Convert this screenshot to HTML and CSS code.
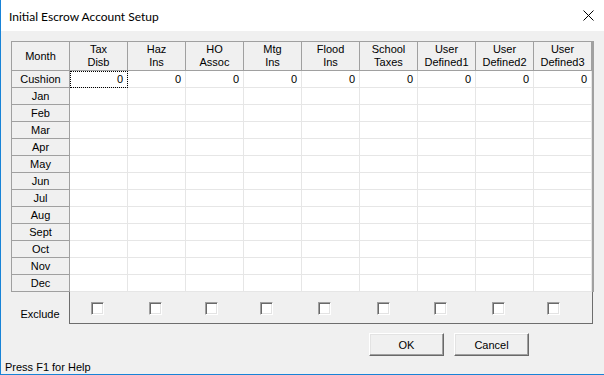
FILE: index.html
```html
<!DOCTYPE html>
<html>
<head>
<meta charset="utf-8">
<link rel="stylesheet" href="styles.css">
</head>
<body>
<div class="window">
  <div class="titlebar">
    <span class="title">Initial Escrow Account Setup</span>
    <svg class="close" width="11" height="11" viewBox="0 0 11 11"><path d="M0.5 0.5 L10.5 10.5 M10.5 0.5 L0.5 10.5" stroke="#000" stroke-width="1" fill="none"/></svg>
  </div>
  <div class="content">
    <div class="grid">
      <div class="hd">Month</div><div class="hd">Tax<br>Disb</div><div class="hd">Haz<br>Ins</div><div class="hd">HO<br>Assoc</div><div class="hd">Mtg<br>Ins</div><div class="hd">Flood<br>Ins</div><div class="hd">School<br>Taxes</div><div class="hd">User<br>Defined1</div><div class="hd">User<br>Defined2</div><div class="hd">User<br>Defined3</div>
      <div class="rh">Cushion</div><div class="c focus">0</div><div class="c">0</div><div class="c">0</div><div class="c">0</div><div class="c">0</div><div class="c">0</div><div class="c">0</div><div class="c">0</div><div class="c">0</div>
      <div class="rh">Jan</div><div class="c"></div><div class="c"></div><div class="c"></div><div class="c"></div><div class="c"></div><div class="c"></div><div class="c"></div><div class="c"></div><div class="c"></div>
      <div class="rh">Feb</div><div class="c"></div><div class="c"></div><div class="c"></div><div class="c"></div><div class="c"></div><div class="c"></div><div class="c"></div><div class="c"></div><div class="c"></div>
      <div class="rh">Mar</div><div class="c"></div><div class="c"></div><div class="c"></div><div class="c"></div><div class="c"></div><div class="c"></div><div class="c"></div><div class="c"></div><div class="c"></div>
      <div class="rh">Apr</div><div class="c"></div><div class="c"></div><div class="c"></div><div class="c"></div><div class="c"></div><div class="c"></div><div class="c"></div><div class="c"></div><div class="c"></div>
      <div class="rh">May</div><div class="c"></div><div class="c"></div><div class="c"></div><div class="c"></div><div class="c"></div><div class="c"></div><div class="c"></div><div class="c"></div><div class="c"></div>
      <div class="rh">Jun</div><div class="c"></div><div class="c"></div><div class="c"></div><div class="c"></div><div class="c"></div><div class="c"></div><div class="c"></div><div class="c"></div><div class="c"></div>
      <div class="rh">Jul</div><div class="c"></div><div class="c"></div><div class="c"></div><div class="c"></div><div class="c"></div><div class="c"></div><div class="c"></div><div class="c"></div><div class="c"></div>
      <div class="rh">Aug</div><div class="c"></div><div class="c"></div><div class="c"></div><div class="c"></div><div class="c"></div><div class="c"></div><div class="c"></div><div class="c"></div><div class="c"></div>
      <div class="rh">Sept</div><div class="c"></div><div class="c"></div><div class="c"></div><div class="c"></div><div class="c"></div><div class="c"></div><div class="c"></div><div class="c"></div><div class="c"></div>
      <div class="rh">Oct</div><div class="c"></div><div class="c"></div><div class="c"></div><div class="c"></div><div class="c"></div><div class="c"></div><div class="c"></div><div class="c"></div><div class="c"></div>
      <div class="rh">Nov</div><div class="c"></div><div class="c"></div><div class="c"></div><div class="c"></div><div class="c"></div><div class="c"></div><div class="c"></div><div class="c"></div><div class="c"></div>
      <div class="rh">Dec</div><div class="c"></div><div class="c"></div><div class="c"></div><div class="c"></div><div class="c"></div><div class="c"></div><div class="c"></div><div class="c"></div><div class="c"></div>
    </div>
    <div class="exclude-row">
      <div class="exclude-label">Exclude</div>
      <div class="exclude-panel">
        <span class="cb"></span><span class="cb"></span><span class="cb"></span><span class="cb"></span><span class="cb"></span><span class="cb"></span><span class="cb"></span><span class="cb"></span><span class="cb"></span>
      </div>
    </div>
    <div class="buttons">
      <button class="btn">OK</button>
      <button class="btn">Cancel</button>
    </div>
    <div class="status">Press F1 for Help</div>
  </div>
</div>
</body>
</html>
```
FILE: styles.css
```css
html, body {
  margin: 0;
  padding: 0;
}
body {
  width: 604px;
  height: 375px;
  overflow: hidden;
  font-family: "Liberation Sans", Arial, sans-serif;
  font-size: 11px;
  color: #000;
}
.window {
  box-sizing: border-box;
  width: 604px;
  height: 375px;
  border-left: 1px solid #1883d7;
  border-bottom: 1px solid #1883d7;
  background: #f0f0f0;
  display: flex;
  flex-direction: column;
}
.titlebar {
  height: 31px;
  flex: none;
  background: #fff;
  display: flex;
  align-items: center;
  padding-left: 8px;
  padding-right: 10px;
}
.title {
  font-family: Lato, "Noto Sans", sans-serif;
  font-size: 12px;
  color: #000;
  margin-top: 1px;
}
.close {
  margin-left: auto;
  margin-top: 0px;
}
.content {
  flex: 1;
  display: flex;
  flex-direction: column;
  padding-left: 10px;
  padding-top: 10px;
}
.grid {
  display: grid;
  grid-template-columns: repeat(10, 58px);
  grid-template-rows: 29px repeat(13, 17px);
  width: 580px;
  border-left: 1px solid #a0a0a0;
  border-top: 1px solid #a0a0a0;
  border-right: 2px solid #a0a0a0;
  background: #fff;
}
.grid > div {
  box-sizing: border-box;
  border-right: 1px solid #a0a0a0;
  border-bottom: 1px solid #a0a0a0;
}
.grid > .hd {
  background: #f0f0f0;
  display: flex;
  align-items: center;
  justify-content: center;
  text-align: center;
  line-height: 13px;
}
.grid > .rh {
  background: #f0f0f0;
  text-align: center;
  line-height: 16px;
}
.grid > .c {
  background: #fff;
  border-color: #e6e6e6;
  text-align: right;
  padding-right: 4px;
  line-height: 16px;
}
.grid > .c.focus {
  outline: 1px dotted #000;
  outline-offset: -1px;
}
.exclude-row {
  display: flex;
  height: 32px;
}
.exclude-label {
  width: 58px;
  text-align: center;
  padding-top: 16px;
  box-sizing: border-box;
}
.exclude-panel {
  box-sizing: border-box;
  width: 524px;
  height: 32px;
  border-left: 1px solid #6d6d6d;
  border-right: 1px solid #6d6d6d;
  border-bottom: 1px solid #6d6d6d;
  display: flex;
  align-items: flex-start;
  padding-top: 10px;
  padding-left: 21px;
}
.cb {
  box-sizing: border-box;
  width: 13px;
  height: 13px;
  flex: none;
  background: #fff;
  border-top: 1px solid #a0a0a0;
  border-left: 1px solid #a0a0a0;
  border-right: 1px solid #fff;
  border-bottom: 1px solid #fff;
  box-shadow: inset 1px 1px 0 #696969, inset -1px -1px 0 #e3e3e3;
}
.cb:nth-child(2) { margin-left: 45px; }
.cb:nth-child(3) { margin-left: 43px; }
.cb:nth-child(4) { margin-left: 42px; }
.cb:nth-child(5) { margin-left: 45px; }
.cb:nth-child(6) { margin-left: 46px; }
.cb:nth-child(7) { margin-left: 44px; }
.cb:nth-child(8) { margin-left: 45px; }
.cb:nth-child(9) { margin-left: 42px; }
.buttons {
  display: flex;
  justify-content: flex-end;
  gap: 10px;
  margin-top: 9px;
  padding-right: 75px;
}
.btn {
  box-sizing: border-box;
  width: 75px;
  height: 23px;
  margin: 0;
  padding: 0;
  font-family: "Liberation Sans", Arial, sans-serif;
  font-size: 11px;
  color: #000;
  background: #f0f0f0;
  border-top: 1px solid #fff;
  border-left: 1px solid #fff;
  border-right: 1px solid #696969;
  border-bottom: 1px solid #696969;
  box-shadow: inset -1px -1px 0 #a0a0a0, inset 1px 1px 0 #e3e3e3;
}
.status {
  margin-top: auto;
  margin-left: -6px;
  line-height: 13px;
  height: 13px;
}
```
